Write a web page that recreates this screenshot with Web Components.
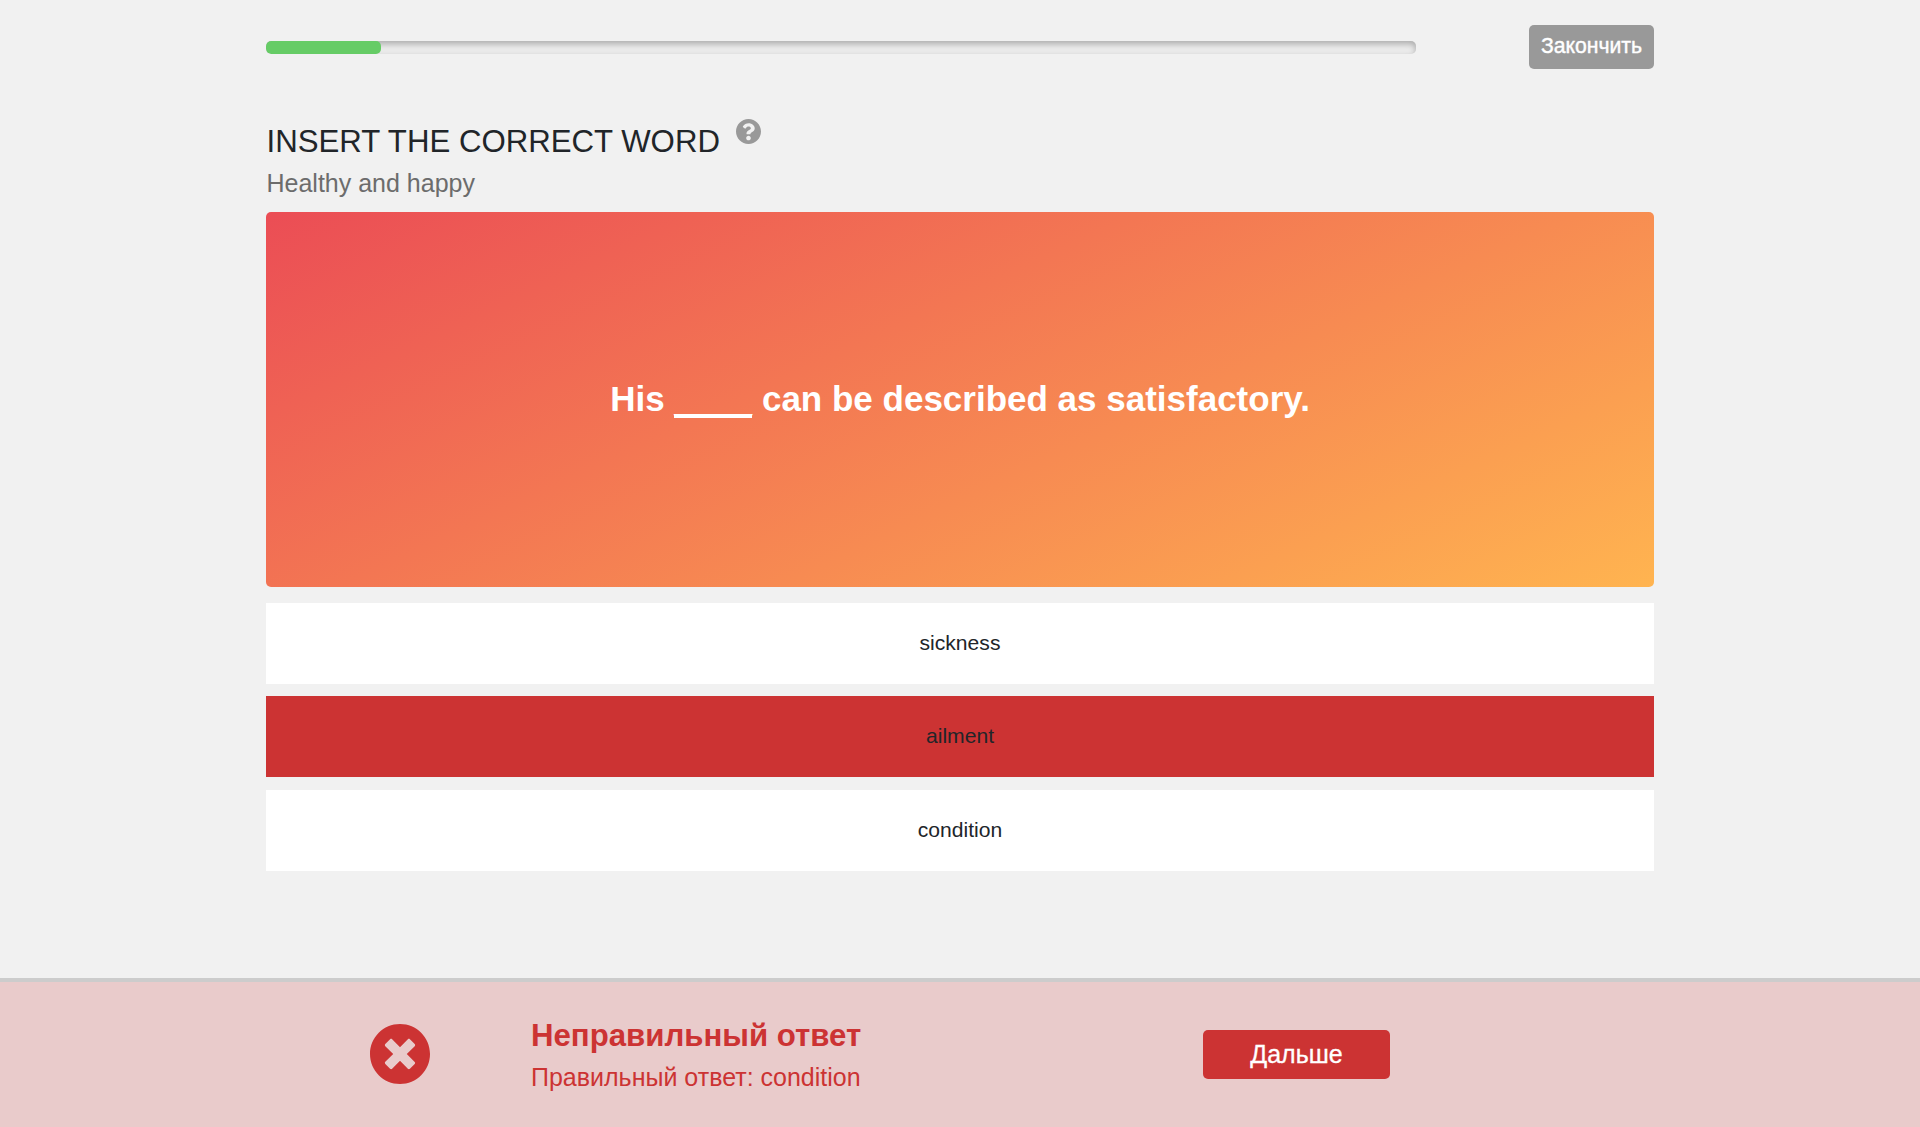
<!DOCTYPE html>
<html lang="ru">
<head>
<meta charset="utf-8">
<title>Insert the correct word</title>
<style>
html,body{margin:0;height:100%}
body{background:#f1f1f1;font-family:"Liberation Sans",Arial,sans-serif;color:#212529;overflow:hidden}
</style>
</head>
<body>
<quiz-page></quiz-page>
<script>
const define = (name, html) => customElements.define(name, class extends HTMLElement {
  constructor() {
    super();
    this.attachShadow({ mode: 'open' }).innerHTML = html;
  }
});

define('quiz-progress', `<style>
:host{display:block;width:1150px;height:13px;border-radius:5px;background:#ececec;box-shadow:inset 0 3px 6px rgba(0,0,0,.28);overflow:hidden}
div{width:10%;height:100%;border-radius:5px;background:#6c6}
</style><div></div>`);

define('quiz-button', `<style>
:host{display:block}
button{box-sizing:border-box;display:block;width:100%;height:100%;border:0;border-radius:5px;padding:0 0 var(--lift,0);margin:0;background:var(--bg);color:#fff;font:inherit;line-height:1;-webkit-text-stroke:var(--weight,0) #fff}
</style><button><slot></slot></button>`);

define('help-icon', `<style>:host{display:block;width:25px;height:25px}svg{display:block;width:100%;height:100%}</style>
<svg viewBox="8 8 496 496"><path fill="#999" d="M504 256c0 137-111 248-248 248S8 393 8 256 119 8 256 8s248 111 248 248zM262.700 90c-54.500 0-89.300 23-116.500 63.800-3.500 5.300-2.400 12.400 2.700 16.300l34.700 26.300c5.200 3.900 12.600 3 16.700-2.100 17.900-22.700 30.100-35.800 57.300-35.800 20.400 0 45.700 13.100 45.700 33 0 15-12.400 22.700-32.500 34C247.100 238.500 216 254.900 216 296v4c0 6.600 5.400 12 12 12h56c6.600 0 12-5.400 12-12v-1.300c0-28.500 83.200-29.600 83.200-106.700 0-58-60.200-102-116.500-102zM256 338c-25.400 0-46 20.600-46 46s20.600 46 46 46 46-20.600 46-46-20.600-46-46-46z"/></svg>`);

define('wrong-icon', `<style>:host{display:block;width:60px;height:60px}svg{display:block;width:100%;height:100%}</style>
<svg viewBox="8 8 496 496"><path fill="#c33" d="M256 8C119 8 8 119 8 256s111 248 248 248 248-111 248-248S393 8 256 8zm121.600 313.100c4.700 4.700 4.700 12.300 0 17L338 377.600c-4.700 4.700-12.300 4.700-17 0L256 312l-65.100 65.600c-4.700 4.700-12.300 4.700-17 0L134.400 338c-4.700-4.700-4.700-12.300 0-17l65.600-65-65.600-65.100c-4.700-4.700-4.700-12.300 0-17l39.600-39.600c4.700-4.700 12.300-4.700 17 0l65 65.700 65.100-65.600c4.700-4.700 12.300-4.700 17 0l39.600 39.600c4.700 4.700 4.700 12.300 0 17L312 256l65.600 65.100z"/></svg>`);

define('quiz-card', `<style>
:host{box-sizing:border-box;display:flex;align-items:center;justify-content:center;height:375px;padding-bottom:2px;border-radius:5px;background:linear-gradient(155deg,#eb4d55,#ffb450);color:#fff;font-size:35px;font-weight:700;line-height:42px}
::slotted(div){white-space:nowrap}
</style><slot></slot>`);

define('quiz-option', `<style>
:host{box-sizing:border-box;display:flex;align-items:center;justify-content:center;height:81px;padding-bottom:2px;background:#fff;font-size:21.100px;line-height:24px}
:host([wrong]){background:#c33}
:host(:last-child){padding-bottom:1px}
</style><slot></slot>`);

define('quiz-result', `<style>
:host{box-sizing:border-box;display:flex;height:149px;border-top:4px solid #ccc;background:#e9cbcb;color:#c33;padding:0 0 0 370px;align-items:flex-start}
wrong-icon{margin-top:42px}
.text{margin:36px 0 0 101px;width:672px}
h2{margin:0;font-size:31.200px;line-height:36px}
p{margin:8px 0 0;font-size:25px;line-height:30px}
quiz-button{--bg:#c33;--weight:.3px;width:187px;height:49px;margin-top:48px;font-size:25px}
</style><wrong-icon></wrong-icon><div class="text"><h2><slot name="title"></slot></h2><p><slot></slot></p></div><quiz-button>Дальше</quiz-button>`);

define('quiz-page', `<style>
:host{display:flex;flex-direction:column;height:1127px}
main{width:1388px;margin:0 auto;flex:1}
.top{display:flex;align-items:center;justify-content:space-between;padding-top:25px;height:44px}
.top quiz-button{--bg:#999;--lift:2px;--weight:.4px;width:125px;height:44px;font-size:21.200px}
.head{display:flex;align-items:flex-start;margin-top:50px}
h1{margin:4px 16.500px 0 .5px;font-weight:400;font-size:31.200px;line-height:38px}
p{margin:6px 0 13px .5px;height:32px;font-size:25px;line-height:32px;color:#6c6c6c}
.blank{background:linear-gradient(#fff,#fff) 0 100%/100% 4px no-repeat}
.list{display:grid;row-gap:12.400px;margin-top:16px}
</style>
<main>
<div class="top"><quiz-progress></quiz-progress><quiz-button>Закончить</quiz-button></div>
<div class="head"><h1>INSERT THE CORRECT WORD</h1><help-icon></help-icon></div>
<p>Healthy and happy</p>
<quiz-card><div>His <span class="blank">____</span> can be described as satisfactory.</div></quiz-card>
<div class="list"><quiz-option>sickness</quiz-option><quiz-option wrong>ailment</quiz-option><quiz-option>condition</quiz-option></div>
</main>
<quiz-result><span slot="title">Неправильный ответ</span>Правильный ответ: condition</quiz-result>`);
</script>
</body>
</html>
